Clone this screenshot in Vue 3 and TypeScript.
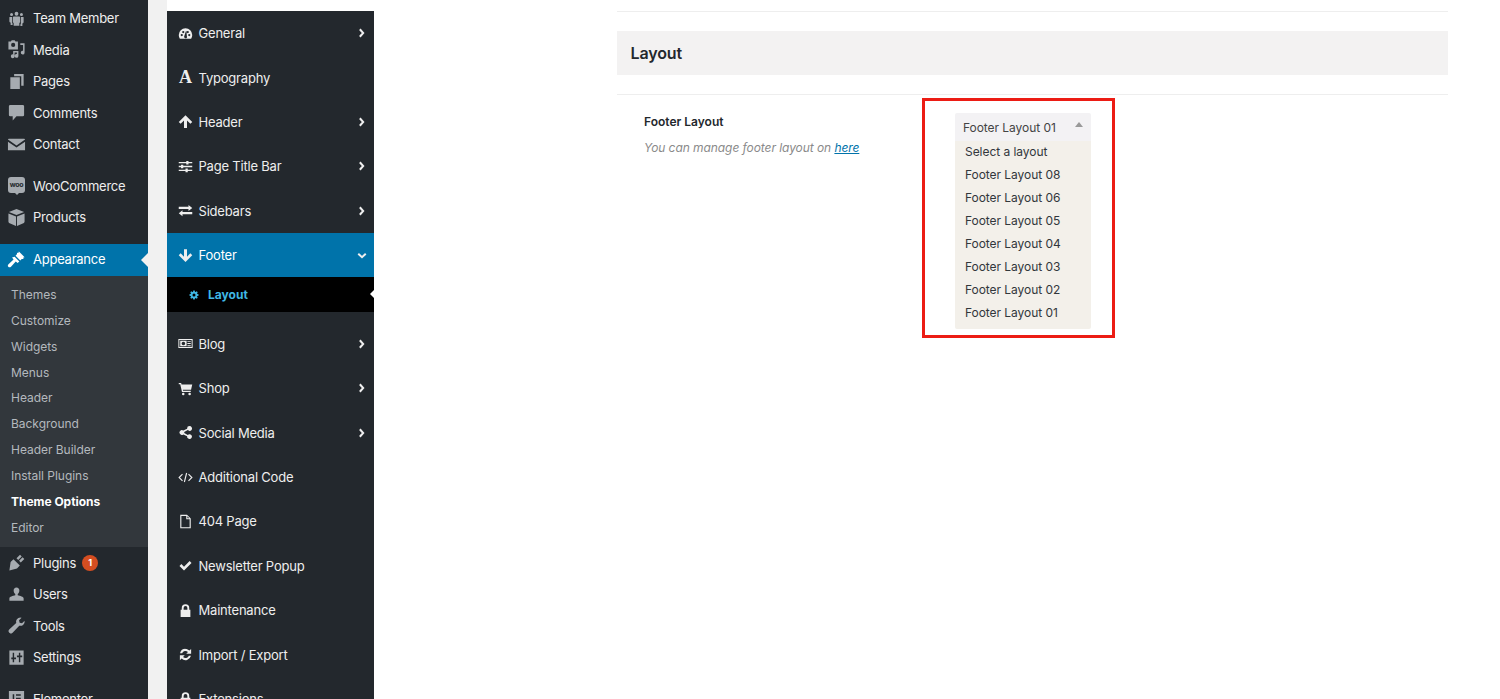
<script setup lang="ts">
interface Item { label: string; icon: string; gapBefore?: boolean; badge?: string; woo?: boolean }
const icons: Record<string, string> = {
  team: 'M10 3a2 2 0 1 1 0 4 2 2 0 0 1 0-4zM4.800 4.200a1.600 1.600 0 1 1 0 3.200 1.600 1.600 0 0 1 0-3.200zM15.200 4.200a1.600 1.600 0 1 1 0 3.200 1.600 1.600 0 0 1 0-3.200zM7.400 8h5.200c.7 0 1.200.5 1.200 1.200v4.600c0 .5-.3.9-.8 1v2.700H7v-2.700c-.5-.1-.8-.5-.8-1V9.200c0-.7.5-1.200 1.200-1.200zM2.700 8.300h2.700v5.900c0 .4.2.8.5 1v1.600H3.800v-2.600c-.7-.1-1.300-.7-1.300-1.400V9c0-.4.100-.7.200-.7zM14.600 8.300h2.700c.1 0 .2.300.2.700v4.800c0 .7-.6 1.300-1.300 1.400v2.600h-2.100v-1.600c.3-.2.500-.6.500-1z',
  media: 'M1.500 1.500h2.500l1-1.200h3l1 1.200h2.500v8.500H1.500zM6.500 3a2.200 2.200 0 1 0 0 4.400 2.200 2.200 0 0 0 0-4.400zM14 3.500h4.500v9.800a2 2 0 1 1-1.600-2V5.200H14zM6.500 11.500h5.500v5.300a2 2 0 1 1-1.600-2v-1.700H8v4a2 2 0 1 1-1.500-1.900z',
  pages: 'M7.500 2h10v12.500H15V4.500H7.500zM3.500 5.500h10V18h-10z',
  comments: 'M3.500 2h13A1.500 1.500 0 0 1 18 3.500v9a1.500 1.500 0 0 1-1.500 1.500H10l-4 4.500V14H3.500A1.500 1.500 0 0 1 2 12.500v-9A1.500 1.500 0 0 1 3.500 2z',
  contact: 'M2 4h16c.6 0 1 .4 1 .8L10 11 1 4.800C1 4.400 1.400 4 2 4zM1 7l9 6.200L19 7v9H1z',
  products: 'M10 1l8 3.200-8 3.200-8-3.200zM1.500 5.700l8 3.200v10L2.800 16c-.8-.3-1.300-1-1.300-1.800zM18.500 5.700v8.500c0 .8-.5 1.500-1.300 1.800l-6.700 2.900v-10z',
  appearance: 'M12.500 1.500L18.500 7.500l-1.600.6.600 1.300-2 .2L14 11 9 6l1.400-1.400.2-1.800 1.300.3zM8 7l5 5-1.800 1.800-2-1.600-5 5.300c-.9.9-2 1-2.800.2-.8-.8-.7-1.900.2-2.800l5.300-5-1.600-2z',
  plugins: 'M2.500 18.500L3.800 9.500 6.800 6.500l6.700 6.700-3 3zM10 5.500l3.700-3.700 1.800 1.800L11.800 7.300zM12.700 8.200l3.700-3.700 1.800 1.800-3.700 3.700z',
  users: 'M10 2.500c1.900 0 3 1.400 3 3.200 0 1.700-.9 3.300-1.700 3.800v1.400c2.500.6 6.200 1.600 6.200 3.300v2.300H2.500v-2.300c0-1.700 3.700-2.700 6.200-3.300V9.500C7.900 9 7 7.400 7 5.700c0-1.800 1.100-3.200 3-3.200z',
  tools: 'M14 1.500a4.500 4.500 0 0 0-4.300 5.800L2.300 14.200a2.400 2.400 0 0 0 0 3.400l.2.100a2.400 2.400 0 0 0 3.400 0l7-7.500a4.500 4.500 0 0 0 5.600-5.200l-2.700 2.700-2.500-.6-.6-2.500 2.700-2.700a4.500 4.500 0 0 0-1.400-.4z',
  settings: 'M2.500 2.500h15v15h-15zM6 5v5H4.500v1.800H6V15h1.500v-3.200h2V10h-2V5zM12.500 5v3h-2v1.800h2V15H14V9.800h2V8h-2V5z',
  elementor: 'M2 2h16v16H2zM6 5.500v9h1.600v-9zM9.500 5.500v1.700h5V5.500zM9.500 9.100v1.800h5V9.100zM9.500 12.800v1.700h5v-1.700z',
  dash: 'M10 3a9 9 0 0 0-9 9c0 1.700.5 3.300 1.300 4.700.2.200.4.300.7.300h14c.3 0 .5-.1.700-.3.800-1.400 1.300-3 1.300-4.700a9 9 0 0 0-9-9zM5 13.500a1.500 1.500 0 1 1 0-3 1.500 1.500 0 0 1 0 3zm2-4a1.500 1.500 0 1 1 0-3 1.500 1.500 0 0 1 0 3zm4.800 6a2 2 0 0 1-3.500-1.900L10.500 7h.8l.5 6.700c.3.600.3 1.300 0 1.800zM13 9.500a1.500 1.500 0 1 1 0-3 1.500 1.500 0 0 1 0 3zm2 4a1.500 1.500 0 1 1 0-3 1.500 1.500 0 0 1 0 3z',
  up: 'M10 1.500l9 9-2.500 2.500-4.500-4.500v10H8v-10L3.500 13 1 10.500z',
  down: 'M10 18.500l9-9L16.500 7 12 11.500v-10H8v10L3.500 7 1 9.500z',
  sliders: 'M1 4h10V2.500h3V4h5v1.800h-5v1.500h-3V5.800H1zM1 9.100h3V7.600h3v1.500h12v1.800H7v1.500H4v-1.500H1zM1 14.200h9v-1.500h3v1.500h6V16h-6v1.500h-3V16H1z',
  swap: 'M14 2.500l5 4-5 4V8H1V5h13zM6 9.500v2.500h13v3H6v2.500l-5-4z',
  blog: 'M.5 4h19v12H.5zM1.800 5.200v9.600h16.400V5.200zM3 6.300h8.500v7.400H3zM12.500 6.500h4.500v1.300h-4.500zM12.500 9.300h4.500v1.300h-4.500zM12.500 12.200h4.500v1.300h-4.500zM7.200 7.500a2.400 2.400 0 1 0 0 4.800 2.400 2.400 0 0 0 0-4.800z',
  cart: 'M1 2.500h3.200l.5 2H19l-1.600 7H6.500l.3 1.500H17v1.800H5.300L3 4.300H1zM7 15.500a1.700 1.700 0 1 1 0 3.400 1.700 1.700 0 0 1 0-3.400zM15.500 15.500a1.700 1.700 0 1 1 0 3.400 1.700 1.700 0 0 1 0-3.400z',
  share: 'M15.500 1.500a3.200 3.200 0 1 1-2.400 5.300L8.300 9.200a3.200 3.200 0 0 1 0 1.600l4.800 2.400a3.200 3.200 0 1 1-.9 1.900l-5.100-2.500a3.200 3.200 0 1 1 0-5.200l5.100-2.500a3.200 3.200 0 0 1 3.300-3.400z',
  file: 'M3 1h9l5 5v13H3zM4.500 2.500v15h11V7H11V2.500zM12.500 3v2.500H15z',
  check: 'M2 10.500l2.500-2.500 3.500 3.500 7.500-7.500 2.500 2.500-10 10z',
  lock: 'M10 1.500a5 5 0 0 1 5 5V9h1.500v9.500h-13V9H5V6.500a5 5 0 0 1 5-5zM7.500 9h5V6.500a2.500 2.500 0 0 0-5 0z',
  sync: 'M10 2.500c2 0 3.900.8 5.200 2.100L17.500 2.500V9h-6.500l2.300-2.300a4.700 4.700 0 0 0-7.800 1.500H2.700A7.500 7.500 0 0 1 10 2.500zM2.500 11H9l-2.300 2.300a4.700 4.700 0 0 0 7.800-1.500h2.800A7.500 7.500 0 0 1 4.800 15.400L2.500 17.500z',
  gear: 'M8.500 1h3l.4 2.400 1.500.6 2-1.400 2.100 2.100-1.400 2 .6 1.500 2.300.4v3l-2.300.4-.6 1.500 1.400 2-2.100 2.100-2-1.400-1.500.6-.4 2.200h-3l-.4-2.200-1.500-.6-2 1.400-2.100-2.100 1.400-2-.6-1.500L1 11.500v-3l2.300-.4.600-1.500-1.400-2 2.100-2.100 2 1.400 1.500-.6zM10 7a3 3 0 1 0 0 6 3 3 0 0 0 0-6z'
}
const topItems: Item[] = [
  { label: 'Team Member', icon: 'team' },
  { label: 'Media', icon: 'media' },
  { label: 'Pages', icon: 'pages' },
  { label: 'Comments', icon: 'comments' },
  { label: 'Contact', icon: 'contact' },
  { label: 'WooCommerce', icon: '', woo: true, gapBefore: true },
  { label: 'Products', icon: 'products' }
]
const subItems = ['Themes', 'Customize', 'Widgets', 'Menus', 'Header', 'Background', 'Header Builder', 'Install Plugins', 'Theme Options', 'Editor']
const lowItems: Item[] = [
  { label: 'Plugins', icon: 'plugins', badge: '1' },
  { label: 'Users', icon: 'users' },
  { label: 'Tools', icon: 'tools' },
  { label: 'Settings', icon: 'settings' },
  { label: 'Elementor', icon: 'elementor', gapBefore: true }
]
interface Opt { label: string; icon: string; more?: boolean; serif?: boolean; code?: boolean }
const optA: Opt[] = [
  { label: 'General', icon: 'dash', more: true },
  { label: 'Typography', icon: '', serif: true },
  { label: 'Header', icon: 'up', more: true },
  { label: 'Page Title Bar', icon: 'sliders', more: true },
  { label: 'Sidebars', icon: 'swap', more: true }
]
const optB: Opt[] = [
  { label: 'Blog', icon: 'blog', more: true },
  { label: 'Shop', icon: 'cart', more: true },
  { label: 'Social Media', icon: 'share', more: true },
  { label: 'Additional Code', icon: '', code: true },
  { label: '404 Page', icon: 'file' },
  { label: 'Newsletter Popup', icon: 'check' },
  { label: 'Maintenance', icon: 'lock' },
  { label: 'Import / Export', icon: 'sync' },
  { label: 'Extensions', icon: 'lock' }
]
const layouts = ['Select a layout', 'Footer Layout 08', 'Footer Layout 06', 'Footer Layout 05', 'Footer Layout 04', 'Footer Layout 03', 'Footer Layout 02', 'Footer Layout 01']
</script>

<template>
  <div class="page">
    <aside class="admin">
      <a v-for="it in topItems" :key="it.label" class="aitem" :class="{ gap: it.gapBefore }">
        <span v-if="it.woo" class="woo">woo</span>
        <svg v-else class="aicon" viewBox="0 0 20 20"><path :d="icons[it.icon]" fill-rule="evenodd" /></svg>
        <span>{{ it.label }}</span>
      </a>
      <a class="aitem current">
        <svg class="aicon white" viewBox="0 0 20 20"><path :d="icons.appearance" fill-rule="evenodd" /></svg>
        <span>Appearance</span>
      </a>
      <div class="sub">
        <a v-for="s in subItems" :key="s" class="subitem" :class="{ strong: s === 'Theme Options' }">{{ s }}</a>
      </div>
      <a v-for="it in lowItems" :key="it.label" class="aitem" :class="{ gap: it.gapBefore }">
        <svg class="aicon" viewBox="0 0 20 20"><path :d="icons[it.icon]" fill-rule="evenodd" /></svg>
        <span>{{ it.label }}</span>
        <span v-if="it.badge" class="badge">{{ it.badge }}</span>
      </a>
    </aside>

    <div class="gutter"></div>

    <nav class="options">
      <a v-for="o in optA" :key="o.label" class="oitem">
        <span v-if="o.serif" class="oglyph">A</span>
        <svg v-else class="oicon" viewBox="0 0 20 20"><path :d="icons[o.icon]" fill-rule="evenodd" /></svg>
        <span class="olabel">{{ o.label }}</span>
        <svg v-if="o.more" class="chev" viewBox="0 0 8 12"><path d="M2 1.500L6 6 2 10.500" /></svg>
      </a>
      <a class="oitem on">
        <svg class="oicon" viewBox="0 0 20 20"><path :d="icons.down" fill-rule="evenodd" /></svg>
        <span class="olabel">Footer</span>
        <svg class="chevd" viewBox="0 0 12 8"><path d="M1.500 2L6 6l4.500-4" /></svg>
      </a>
      <a class="osub">
        <svg class="gear" viewBox="0 0 20 20"><path :d="icons.gear" fill-rule="evenodd" /></svg>
        <span>Layout</span>
      </a>
      <a v-for="o in optB" :key="o.label" class="oitem">
        <svg v-if="o.code" class="oicon" viewBox="0 0 20 20"><path class="codep" d="M6 5.500L1.500 10 6 14.500M14 5.500l4.500 4.500L14 14.500M11.500 4l-3 12" /></svg>
        <svg v-else class="oicon" viewBox="0 0 20 20"><path :d="icons[o.icon]" fill-rule="evenodd" /></svg>
        <span class="olabel">{{ o.label }}</span>
        <svg v-if="o.more" class="chev" viewBox="0 0 8 12"><path d="M2 1.500L6 6 2 10.500" /></svg>
      </a>
    </nav>

    <main class="content">
      <div class="rule"></div>
      <h2 class="title">Layout</h2>
      <section class="row">
        <div class="lab">
          <div class="name">Footer Layout</div>
          <div class="desc">You can manage footer layout on <a class="link">here</a></div>
        </div>
        <div class="mark">
          <div class="select">
            <div class="shead">
              <span>Footer Layout 01</span>
              <i class="tri"></i>
            </div>
            <ul class="slist">
              <li v-for="l in layouts" :key="l">{{ l }}</li>
            </ul>
          </div>
        </div>
      </section>
    </main>
  </div>
</template>

<style scoped>
.page {
  display: flex;
  height: 699px;
  overflow: hidden;
  background: #fff;
  font-family: Inter, "Noto Sans", sans-serif;
}
.admin {
  width: 148px;
  flex: none;
  background: #23282d;
  padding-top: 2.4px;
}
.gutter {
  width: 19px;
  flex: none;
  background: #f1f1f1;
}
.aitem {
  display: flex;
  align-items: center;
  position: relative;
  height: 31.5px;
  padding-left: 7px;
  color: #eee;
  font-size: 13px;
  letter-spacing: -0.25px;
}
.aitem.gap { margin-top: 10.1px; }
.aitem.current {
  margin-top: 10.9px;
  background: #0073aa;
  color: #fff;
  box-sizing: border-box;
  height: 32px;
  padding-bottom: 1px;
}
.aitem.current::after {
  content: "";
  position: absolute;
  right: 0;
  top: 9px;
  border: 7px solid transparent;
  border-left-width: 0;
  border-right-color: #f1f1f1;
}
.aicon {
  width: 19px;
  height: 19px;
  flex: none;
  margin-right: 7px;
  fill: #a6abb0;
}
.aicon.white { fill: #fff; }
.woo {
  position: relative;
  width: 17px;
  height: 16px;
  flex: none;
  margin: -2px 8px 0 1px;
  border-radius: 3px;
  background: #a6abb0;
  color: #23282d;
  font-size: 7px;
  font-weight: 700;
  line-height: 15px;
  text-align: center;
}
.woo::after {
  content: "";
  position: absolute;
  left: 7px;
  bottom: -2px;
  border: 2px solid transparent;
  border-bottom-width: 0;
  border-top-color: #a6abb0;
}
.sub {
  background: #32373c;
  padding: 6px 0;
}
.subitem {
  display: block;
  height: 25.9px;
  line-height: 26px;
  padding-left: 11px;
  color: #b4b9be;
  font-size: 12px;
  letter-spacing: -0.03px;
}
.subitem.strong {
  color: #fff;
  font-weight: 700;
}
.badge {
  width: 16px;
  height: 16px;
  margin-left: 6px;
  border-radius: 50%;
  background: #d54e21;
  color: #fff;
  font-size: 9px;
  font-weight: 700;
  line-height: 16px;
  text-align: center;
}
.options {
  width: 207px;
  flex: none;
  margin-top: 11px;
  background: #23282d;
}
.oitem {
  display: flex;
  align-items: center;
  height: 44.4px;
  padding-left: 11px;
  color: #eee;
  font-size: 13px;
  letter-spacing: -0.2px;
}
.osub + .oitem { margin-top: 9.3px; }
.oitem.on {
  background: #0073aa;
  color: #fff;
}
.oicon {
  width: 15px;
  height: 15px;
  flex: none;
  margin-right: 5.5px;
  fill: #eee;
}
.codep {
  fill: none;
  stroke: #eee;
  stroke-width: 1.500;
}
.oglyph {
  width: 15px;
  margin-right: 5.5px;
  flex: none;
  font-family: "Liberation Serif", serif;
  font-size: 18px;
  font-weight: 700;
  text-align: center;
}
.olabel { flex: 1; }
.chev {
  width: 7px;
  height: 10px;
  margin-right: 9px;
  fill: none;
  stroke: #eee;
  stroke-width: 2.400;
}
.chevd {
  width: 10px;
  height: 7px;
  margin-right: 7px;
  fill: none;
  stroke: #eee;
  stroke-width: 2.400;
}
.osub {
  display: flex;
  align-items: center;
  position: relative;
  height: 35px;
  padding-left: 22px;
  background: #000;
  color: #3fb8e4;
  font-size: 12px;
  font-weight: 700;
}
.osub::after {
  content: "";
  position: absolute;
  right: 0;
  top: 13px;
  border: 4px solid transparent;
  border-left-width: 0;
  border-right-color: #fff;
}
.gear {
  width: 10px;
  height: 10px;
  margin-right: 9px;
  fill: #3fb8e4;
}
.content {
  flex: 1;
  margin-left: 243px;
  margin-right: 52px;
  padding-top: 11px;
}
.rule {
  height: 1px;
  background: #eee;
}
.title {
  margin: 19px 0 19px;
  height: 44px;
  padding-left: 13.500px;
  background: #f3f2f2;
  color: #23282d;
  font-size: 16px;
  font-weight: 600;
  letter-spacing: -0.15px;
  line-height: 44px;
}
.row {
  display: flex;
  border-top: 1px solid #eee;
}
.lab {
  width: 305px;
  flex: none;
  padding: 19px 0 0 27px;
  box-sizing: border-box;
}
.name {
  color: #23282d;
  font-size: 12px;
  font-weight: 600;
  line-height: 16px;
}
.desc {
  margin-top: 10px;
  color: #8a8a8a;
  font-size: 12px;
  font-style: italic;
  letter-spacing: -0.07px;
  line-height: 16px;
}
.link {
  color: #0073aa;
  text-decoration: underline;
}
.mark {
  width: 193px;
  height: 240px;
  box-sizing: border-box;
  margin-top: 3px;
  border: 3px solid #ec1c14;
  padding: 12px 21px 0 30px;
}
.select {
  width: 136px;
  border-radius: 2px;
  overflow: hidden;
  color: #32373c;
  font-size: 12px;
  letter-spacing: -0.05px;
}
.shead {
  display: flex;
  align-items: center;
  justify-content: space-between;
  height: 28px;
  padding: 0 8px;
  background: #f3f2f4;
  color: #444;
}
.tri {
  margin: -6px 0 0;
  border: 4px solid transparent;
  border-top-width: 0;
  border-bottom: 5px solid #999;
}
.slist {
  list-style: none;
  margin: 0;
  padding: 1px 0 3px;
  background: #f3f0ea;
}
.slist li {
  height: 23px;
  line-height: 20.5px;
  padding-left: 10px;
}
</style>
